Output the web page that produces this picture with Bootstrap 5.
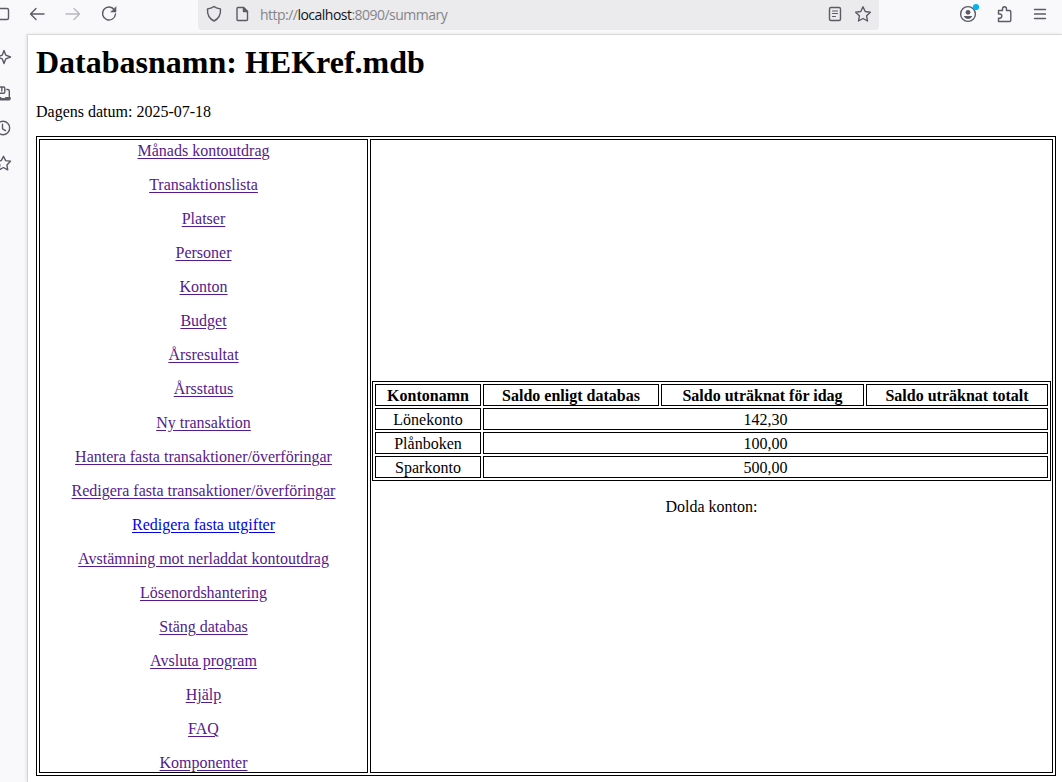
<!DOCTYPE html>
<html lang="sv">
<head>
<meta charset="utf-8">
<title>Databasnamn: HEKref.mdb</title>
<link href="https://cdn.jsdelivr.net/npm/bootstrap@5.3.0/dist/css/bootstrap.min.css" rel="stylesheet">
<style>
  body { background: #f9f9fb; height: 782px; color: #000; }
  svg { display: block; flex: none; fill: none; stroke: #5b5b66; stroke-width: 1.4; stroke-linecap: round; stroke-linejoin: round; }
  .toolbar { height: 34px; }
  .tool-left { width: 198px; height: 28px; }
  .urlbar { width: 681px; height: 30px; padding: 0 8px; background: #ebebed; border-radius: 0 0 4px 4px; }
  .urlbar svg { margin-top: -2px; }
  .url { font: 14px/20px "Open Sans", "Noto Sans", sans-serif; color: #85858a; letter-spacing: -.52px; margin: 0 0 0 11px; }
  .url b { font-weight: 400; color: #15141a; }
  .tool-right { height: 28px; padding-left: 80px; }
  .siderail { width: 27px; padding-top: 14px; }
  .page { border-left: 1px solid #d5d5d7; border-top: 1px solid #d9d9dc; box-shadow: -1px 0 3px rgba(0,0,0,.09); padding: 9px 6px 0 8px; font: 16px/18px "Liberation Serif", serif; }
  .page h1 { font: bold 32px/37px "Liberation Serif", serif; margin: 0 0 22px; }
  .page p { margin: 0 0 15px; }
  .box { border: 1px solid #000; border-collapse: separate; border-spacing: 2px; table-layout: fixed; }
  .box > tbody > tr > td, .box > tbody > tr > th, .box > thead > tr > th { border: 1px solid #000; padding: 2px 1px 0; text-align: center; }
  .outer { width: 1020px; height: 640px; }
  .outer > tbody > tr > .accounts-col { padding: 1px; }
  .menu-col { width: 329px; }
  .menu-list { gap: 16px; }
  .menu-list a { color: #551a8b; text-decoration: underline; text-underline-offset: 2px; }
  .menu-list a.fresh { color: #0000ee; }
  .accounts { width: 679px; margin-bottom: 17px; }
  .page .hidden-accounts { margin: 0 0 15px; }
</style>
</head>
<body class="d-flex flex-column overflow-hidden">
<header class="toolbar d-flex flex-shrink-0">
  <div class="tool-left d-flex align-items-center">
    <svg width="29" height="28"><rect x="-6" y="8.5" width="14.5" height="11" rx="1.5"/></svg>
    <svg width="36" height="28"><path d="M1.5 14H15M7 8.5 1.5 14 7 19.5"/></svg>
    <svg width="36" height="28" style="opacity:.4"><path d="M1 14h13.500M9 8.500l5.500 5.500L9 19.500"/></svg>
    <svg width="20" height="28"><path d="M13.300 9.700A6.500 6.500 0 1 0 14.500 14"/><path d="M15 7v5h-5z" fill="#5b5b66" stroke-width=".6"/></svg>
  </div>
  <div class="urlbar d-flex align-items-center">
    <svg width="28" height="28"><path d="M8 6.500c2 1.700 4 2 6.500 2.500.4 6-2 9.800-6.500 12C3.500 18.800 1.100 15 1.500 9 4 8.500 6 8.200 8 6.500z"/></svg>
    <svg width="15" height="28"><path d="M4 7.500h5.500l4 4v8q0 1-1 1H4q-1 0-1-1v-11q0-1 1-1z"/><path d="M9.500 7.500v4h4z" fill="#5b5b66"/></svg>
    <div class="url"><span>http://</span><b>localhost</b><span>:8090/summary</span></div>
    <svg class="ms-auto" width="28" height="28"><rect x="2.500" y="7.500" width="11" height="13" rx="1.500"/><path d="M5.500 11h5M5.500 13.500h5M5.500 16.500h3" stroke-width="1.100"/></svg>
    <svg width="16" height="28"><path d="m8 6.800 2.200 4.700 5.200.7-3.800 3.600.9 5.200L8 18.500 3.500 21l.9-5.200L.6 12.200l5.200-.7z"/></svg>
  </div>
  <div class="tool-right d-flex align-items-center">
    <svg width="36" height="28"><circle cx="9" cy="14" r="7.400"/><circle cx="9" cy="12.300" r="2.400" fill="#5b5b66" stroke="none"/><path d="M4.800 16h8.400c-.8 2-2.300 3-4.200 3s-3.400-1-4.200-3z" fill="#5b5b66" stroke="none"/><circle cx="17" cy="7" r="3.100" fill="#00b3f4" stroke="none"/></svg>
    <svg width="36" height="28"><path d="M3.500 14V10.500h4V9q0-2.200 2-2.200t2 2.200v1.500h3q1.300 0 1.300 1.300v8.400q0 1.300-1.300 1.300H3.500v-3.300h1.300q2 0 2-2.100T4.800 14H3.500"/></svg>
    <svg width="16" height="28"><path d="M3.500 9.500h11M3.500 14h11M3.500 18.500h11"/></svg>
  </div>
</header>
<div class="d-flex flex-grow-1">
  <aside class="siderail d-flex flex-column flex-shrink-0">
    <svg width="16" height="36"><path d="M4 2.500l1.800 4.700 4.700 1.800-4.700 1.800L4 15.500l-1.800-4.700L-2.500 9l4.700-1.800z"/></svg>
    <svg width="16" height="35"><path d="M-3 9.500V3H3.500q1.300 0 1.300 1.300V8q0 1.300-1.300 1.300H-3M1.800 3v4M6.800 5.500h1q1.500 0 1.500 1.500v5.500"/><path d="M-4 13.500h5l1 1h2.500l1-1h4.800v1.300q0 1.200-1.200 1.200H-4z" fill="#5b5b66" stroke-width="1"/></svg>
    <svg width="16" height="35"><circle cx="3" cy="9" r="6.700"/><path d="M2.500 5.300v4.500l3 1.800"/></svg>
    <svg width="16" height="30"><path d="m3.500 2.300 2.100 4.300 4.900.7-3.600 3.600.8 5-4.200-2.400-4.500 2.400.9-5.200L-4 7.300l5.200-.7z"/></svg>
  </aside>
  <main class="page bg-white flex-grow-1">
    <h1>Databasnamn: HEKref.mdb</h1>
    <p>Dagens datum: 2025-07-18</p>
    <table class="box outer">
      <tbody><tr>
        <td class="menu-col align-top">
          <nav class="menu-list d-flex flex-column align-items-center">
            <a href="#">Månads kontoutdrag</a>
            <a href="#">Transaktionslista</a>
            <a href="#">Platser</a>
            <a href="#">Personer</a>
            <a href="#">Konton</a>
            <a href="#">Budget</a>
            <a href="#">Årsresultat</a>
            <a href="#">Årsstatus</a>
            <a href="#">Ny transaktion</a>
            <a href="#">Hantera fasta transaktioner/överföringar</a>
            <a href="#">Redigera fasta transaktioner/överföringar</a>
            <a href="#" class="fresh">Redigera fasta utgifter</a>
            <a href="#">Avstämning mot nerladdat kontoutdrag</a>
            <a href="#">Lösenordshantering</a>
            <a href="#">Stäng databas</a>
            <a href="#">Avsluta program</a>
            <a href="#">Hjälp</a>
            <a href="#">FAQ</a>
            <a href="#">Komponenter</a>
          </nav>
        </td>
        <td class="accounts-col align-middle">
          <table class="box accounts">
            <colgroup><col style="width:106px"><col style="width:176px"><col style="width:203px"><col style="width:182px"></colgroup>
            <thead><tr><th>Kontonamn</th><th>Saldo enligt databas</th><th>Saldo uträknat för idag</th><th>Saldo uträknat totalt</th></tr></thead>
            <tbody>
              <tr><td>Lönekonto</td><td colspan="3">142,30</td></tr>
              <tr><td>Plånboken</td><td colspan="3">100,00</td></tr>
              <tr><td>Sparkonto</td><td colspan="3">500,00</td></tr>
            </tbody>
          </table>
          <p class="hidden-accounts">Dolda konton:</p>
        </td>
      </tr></tbody>
    </table>
  </main>
</div>
<script src="https://cdn.jsdelivr.net/npm/bootstrap@5.3.0/dist/js/bootstrap.bundle.min.js"></script>
</body>
</html>
